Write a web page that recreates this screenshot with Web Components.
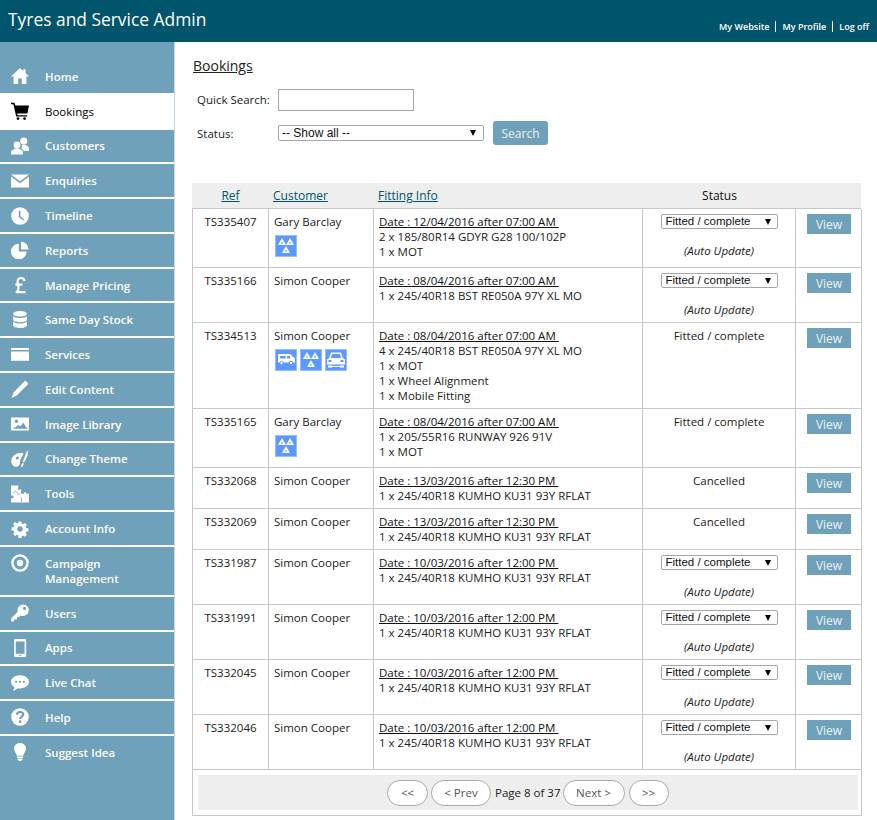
<!DOCTYPE html>
<html>
<head>
<meta charset="utf-8">
<title>Tyres and Service Admin</title>
<style>
html, body { margin: 0; height: 820px; overflow: hidden; background: #fff; }
body { font: 12px/15px "Open Sans", "Liberation Sans", sans-serif; color: #222; }
</style>
</head>
<body>
<admin-shell>
  <admin-header slot="header" title="Tyres and Service Admin"></admin-header>
  <side-nav slot="nav">
    <nav-item icon="home">Home</nav-item>
    <nav-item icon="cart" active>Bookings</nav-item>
    <nav-item icon="customers">Customers</nav-item>
    <nav-item icon="mail">Enquiries</nav-item>
    <nav-item icon="clock">Timeline</nav-item>
    <nav-item icon="pie">Reports</nav-item>
    <nav-item icon="pound">Manage Pricing</nav-item>
    <nav-item icon="stack">Same Day Stock</nav-item>
    <nav-item icon="card">Services</nav-item>
    <nav-item icon="pencil">Edit Content</nav-item>
    <nav-item icon="image">Image Library</nav-item>
    <nav-item icon="palette">Change Theme</nav-item>
    <nav-item icon="puzzle">Tools</nav-item>
    <nav-item icon="gear">Account Info</nav-item>
    <nav-item icon="target">Campaign<br>Management</nav-item>
    <nav-item icon="key">Users</nav-item>
    <nav-item icon="phone">Apps</nav-item>
    <nav-item icon="chat">Live Chat</nav-item>
    <nav-item icon="help">Help</nav-item>
    <nav-item icon="bulb" last>Suggest Idea</nav-item>
  </side-nav>
  <bookings-page>
    <search-form></search-form>
    <booking-table>
      <booking-row ref="TS335407" customer="Gary Barclay" date="12/04/2016 after 07:00 AM" badges="mot" status="select">
        <div>2 x 185/80R14 GDYR G28 100/102P</div><div>1 x MOT</div>
      </booking-row>
      <booking-row ref="TS335166" customer="Simon Cooper" date="08/04/2016 after 07:00 AM" status="select">
        <div>1 x 245/40R18 BST RE050A 97Y XL MO</div>
      </booking-row>
      <booking-row ref="TS334513" customer="Simon Cooper" date="08/04/2016 after 07:00 AM" badges="van mot car" status="Fitted / complete">
        <div>4 x 245/40R18 BST RE050A 97Y XL MO</div><div>1 x MOT</div><div>1 x Wheel Alignment</div><div>1 x Mobile Fitting</div>
      </booking-row>
      <booking-row ref="TS335165" customer="Gary Barclay" date="08/04/2016 after 07:00 AM" badges="mot" status="Fitted / complete">
        <div>1 x 205/55R16 RUNWAY 926 91V</div><div>1 x MOT</div>
      </booking-row>
      <booking-row ref="TS332068" customer="Simon Cooper" date="13/03/2016 after 12:30 PM" status="Cancelled">
        <div>1 x 245/40R18 KUMHO KU31 93Y RFLAT</div>
      </booking-row>
      <booking-row ref="TS332069" customer="Simon Cooper" date="13/03/2016 after 12:30 PM" status="Cancelled">
        <div>1 x 245/40R18 KUMHO KU31 93Y RFLAT</div>
      </booking-row>
      <booking-row ref="TS331987" customer="Simon Cooper" date="10/03/2016 after 12:00 PM" status="select">
        <div>1 x 245/40R18 KUMHO KU31 93Y RFLAT</div>
      </booking-row>
      <booking-row ref="TS331991" customer="Simon Cooper" date="10/03/2016 after 12:00 PM" status="select">
        <div>1 x 245/40R18 KUMHO KU31 93Y RFLAT</div>
      </booking-row>
      <booking-row ref="TS332045" customer="Simon Cooper" date="10/03/2016 after 12:00 PM" status="select">
        <div>1 x 245/40R18 KUMHO KU31 93Y RFLAT</div>
      </booking-row>
      <booking-row ref="TS332046" customer="Simon Cooper" date="10/03/2016 after 12:00 PM" status="select">
        <div>1 x 245/40R18 KUMHO KU31 93Y RFLAT</div>
      </booking-row>
      <table-pager page="8" pages="37"></table-pager>
    </booking-table>
  </bookings-page>
</admin-shell>

<script>
const BLUE = '#6fa1bb';

// nav icons, all on an 18 x 18 box
const ICONS = {
  home: `<path d="M9 1l3.200 3V2.200h2.400v4L18 9.600h-2.600V17h-4.600v-5.400H7.200V17H2.600V9.600H0z"/>`,
  cart: `<path d="M0 .8h3.400l1 2.600H18l-1.600 8.200H6.200l.4 1.600h9.600v1.400H5.200L2.400 2.200H0z"/><circle cx="7" cy="16.600" r="1.400"/><circle cx="13.600" cy="16.600" r="1.400"/>`,
  customers: `<circle cx="6" cy="8" r="3.400"/><path d="M0 17.600v-2.800c0-2 3.400-2.200 3.800-3.400h4.400c.4 1.200 3.800 1.400 3.800 3.400v2.800z"/><circle cx="12.800" cy="4" r="3.600"/><path d="M10.600 7.800h4.400c.4 1.200 3 1.600 3 3.600v2.600h-5c-.6-1.400-2.200-2-2.800-2.800 1.400-1.200 1-2.600.4-3.400z"/>`,
  mail: `<path d="M0 2.400h18L9 9.200z"/><path d="M0 4.400l9 6.800 9-6.800v11.200H0z"/>`,
  clock: `<circle cx="9" cy="9" r="8.800"/><path d="M8.600 3.800v5.800l4 3.400" fill="none" stroke="${BLUE}" stroke-width="1.600"/>`,
  pie: `<path d="M7.800 2.800v7.800h7.800A7.800 7.800 0 1 1 7.800 2.800z"/><path d="M10 .6a7.800 7.800 0 0 1 7.600 7.800H10z"/>`,
  pound: `<path d="M13.500 5.200C13.200 2.800 11.800 2 10.200 2 8 2 6.600 3.400 6.600 5.600c0 3 .9 4.400.9 6.600 0 2-1 3.200-2.500 4h9.600M4.400 8.600h7" fill="none" stroke="currentColor" stroke-width="2.200"/>`,
  stack: `<path d="M2.200 2.800C2.200 1 5.200 0 9 0s6.800 1 6.800 2.800S12.800 5.600 9 5.600 2.200 4.600 2.200 2.800z"/><path d="M2.200 5c1 1.400 4 2 6.800 2s5.800-.6 6.800-2v3.400c0 1.800-3 2.800-6.800 2.800s-6.800-1-6.800-2.800z"/><path d="M2.200 10.600c1 1.400 4 2 6.800 2s5.800-.6 6.800-2v3.600C15.800 16 12.800 17 9 17s-6.800-1-6.800-2.800z"/>`,
  card: `<path d="M0 2h18v2H0zM0 5.400h18V14.800H0z"/>`,
  pencil: `<path d="M14.200.6l3.200 3.200L6 15.200.4 18l2.400-5.800z"/>`,
  image: `<path fill-rule="evenodd" d="M0 2.400h18v13.200H0zM2 13.800h14.400l-4.200-6-3 3.600-1.800-1.400zM5.400 4.400a1.800 1.800 0 1 0 0 3.600 1.800 1.800 0 0 0 0-3.600z"/>`,
  palette: `<path fill-rule="evenodd" d="M9.800 2.800C5 2.800.2 6.400.2 11.200c0 3.400 2.600 5.600 5.200 5.600 2.200 0 3-1.800 3.400-3.400l.6-3.800 3-5.400c-.6-1.400-1.400-1.400-2.600-1.400zM6.400 6.400a1.500 1.500 0 1 0 0 3 1.500 1.500 0 0 0 0-3z"/><path d="M16.200 .6c1.200 1.200 1 3.400.4 4.800l-3.400 6.800-1.400-.6 2.800-7c.4-1.200.8-2.600 1.600-4z"/><path d="M11.200 12.800l1.800.8-1.800 3.600-1.200-.4z"/>`,
  puzzle: `<path d="M0 .4h7.400v2.200c-.8.600-.8 2 .4 2.200 1.200.2 2-.6 2.400-1v5h3c-.4-1 .2-1.800 1-1.800s1.200.8.8 1.800h3v8.800H0v-4.400c1.400.6 2.600 0 2.600-1.400S1.200 10.200 0 10.800z"/><path d="M2.400 8.400c1-2.600 2.600-2.600 3.600-.6s2 2 3.600.2M10.400 12.400v5" fill="none" stroke="${BLUE}" stroke-width=".8"/>`,
  gear: `<path fill-rule="evenodd" d="M7.400.6h3.200l.4 2.400 1.500.6 2-1.400 2.200 2.200-1.400 2 .7 1.600 2.400.4v3.200l-2.400.4-.7 1.500 1.400 2-2.200 2.200-2-1.400-1.500.7-.4 2.400H7.400L7 16l-1.500-.7-2 1.400-2.200-2.200 1.400-2-.7-1.500L-.4 10.600V7.400L2 7l.7-1.600-1.400-2 2.200-2.200 2 1.400L7 3zM9 6a3 3 0 1 0 0 6 3 3 0 0 0 0-6z" transform="translate(.9 .9) scale(.9)"/>`,
  target: `<path fill-rule="evenodd" d="M9 .2a8.800 8.800 0 1 1 0 17.600A8.800 8.800 0 0 1 9 .2zm0 2.400a6.400 6.400 0 1 0 0 12.800A6.400 6.400 0 0 0 9 2.600z"/><circle cx="9" cy="9" r="3.200"/>`,
  key: `<path fill-rule="evenodd" d="M12 .4a5.800 5.800 0 1 1-2.400 11.100L8 13.200H6v2H4L2.400 17.600H.2v-3.400l6.500-6.400A5.800 5.800 0 0 1 12 .4zm1.600 2.400a1.600 1.600 0 1 0 0 3.200 1.600 1.600 0 0 0 0-3.200z"/>`,
  phone: `<path fill-rule="evenodd" d="M4 0h10.400a.8.800 0 0 1 .8.800v16.400a.8.800 0 0 1-.8.800H4a.8.800 0 0 1-.8-.8V.8A.8.800 0 0 1 4 0zm.8 2.400v12.400h8.800V2.400zM9.200 15.600a.8.800 0 1 0 0 1.600.8.800 0 0 0 0-1.600z"/>`,
  chat: `<path d="M9 1.200c5 0 9 2.900 9 6.600s-4 6.600-9 6.600c-.8 0-1.600-.1-2.300-.2C5.600 15.400 3.800 16.400 1.800 16.800c.8-1 1.400-2.200 1.500-3.600C1.300 12 0 10 0 7.800 0 4.100 4 1.200 9 1.200z"/><g fill="${BLUE}"><circle cx="5.200" cy="7.800" r="1.100"/><circle cx="9" cy="7.800" r="1.100"/><circle cx="12.800" cy="7.800" r="1.100"/></g>`,
  help: `<circle cx="9" cy="9" r="8.800"/><path d="M6 6.800C6 5 7.400 4 9.100 4 10.800 4 12.200 5 12.200 6.600 12.200 8.600 9.200 8.800 9.200 11" fill="none" stroke="${BLUE}" stroke-width="2.200"/><rect x="8" y="12.400" width="2.400" height="2.400" fill="${BLUE}"/>`,
  bulb: `<path d="M9 0c3.400 0 6 2.400 6 5.600 0 3-2.200 4.400-2.800 7.200H5.800C5.200 10 3 8.600 3 5.600 3 2.400 5.600 0 9 0z"/><path d="M6 13.600h6v1.400H6zM6.600 15.600h4.800v1.200L10 18H8l-1.400-1.200z"/>`
};

// small road sign style badges in the customer column
const tri = (x, y) => `<path d="M${x} ${y}l4 7h-8z" fill="#fff"/><path d="M${x} ${y + 3.600}l1.100 1.900h-2.200z" fill="#5b98ff"/>`;
const BADGES = {
  mot: tri(7, 3) + tri(15, 3) + tri(11, 11),
  van: `<path d="M3 5h12.400l2.600 3 2 1.200V13.500H3z" fill="#fff"/><rect x="5" y="7" width="5.500" height="2.500" fill="#5b98ff"/><rect x="12" y="7" width="3" height="2.500" fill="#5b98ff"/><circle cx="6.500" cy="14" r="1.700" fill="#fff" stroke="#5b98ff"/><circle cx="16" cy="14" r="1.700" fill="#fff" stroke="#5b98ff"/>`,
  car: `<path fill-rule="evenodd" d="M6 3.500h10l2 5.500 2 1.500V15.500H2V10.500L4 9zM7.200 5L5.800 9h10.400l-1.400-4zM3.500 11v2h3v-2zM15.500 11v2h3v-2z" fill="#fff"/><rect x="3" y="16.500" width="4" height="2" fill="#fff"/><rect x="15" y="16.500" width="4" height="2" fill="#fff"/><rect x="7" y="17" width="8" height="1" fill="#fff"/>`
};

class AdminShell extends HTMLElement {
  constructor() {
    super();
    this.attachShadow({ mode: 'open' });
    this.shadowRoot.innerHTML = `
      <style>
        :host { display: block; height: 820px; }
        .body { display: flex; height: 778px; }
      </style>
      <slot name="header"></slot>
      <div class="body">
        <slot name="nav"></slot>
        <slot></slot>
      </div>`;
  }
}
customElements.define('admin-shell', AdminShell);

class AdminHeader extends HTMLElement {
  connectedCallback() {
    this.attachShadow({ mode: 'open' }).innerHTML = `
      <style>
        :host { display: flex; justify-content: space-between; height: 42px; background: #00546b; color: #fff; padding: 0 8px; }
        h1 { margin: 0; font: 400 17.400px/38px "Open Sans", sans-serif; }
        nav { display: flex; align-items: center; margin: 21px 0 0; height: 11px; font-size: 9px; line-height: 11px; font-weight: 600; }
        a { color: #fff; text-decoration: none; padding: 0 6px; border-left: 1.500px solid #fff; }
        a:first-child { border-left: 0; }
        a:last-child { padding-right: 0; }
      </style>
      <h1>${this.getAttribute('title')}</h1>
      <nav><a>My Website</a><a>My Profile</a><a>Log off</a></nav>`;
  }
}
customElements.define('admin-header', AdminHeader);

class SideNav extends HTMLElement {
  constructor() {
    super();
    this.attachShadow({ mode: 'open' }).innerHTML = `
      <style>
        :host { display: block; flex: none; width: 174px; padding-top: 18px; background: ${BLUE}; border-right: 1px solid #c9dbe6; }
      </style>
      <slot></slot>`;
  }
}
customElements.define('side-nav', SideNav);

class NavItem extends HTMLElement {
  connectedCallback() {
    const last = this.hasAttribute('last');
    this.attachShadow({ mode: 'open' }).innerHTML = `
      <style>
        :host { display: flex; gap: 16px; padding: 8.900px 0 8.900px 11px; border-bottom: 2px solid ${last ? 'transparent' : '#fff'};
          color: #fff; font-weight: 600; font-size: 11.500px; line-height: 15px; }
        :host([active]) { background: #fff; color: #000; font-weight: 400; }
        svg { flex: none; width: 18px; height: 18px; margin: -1.500px 0; fill: currentColor; }
      </style>
      <svg viewBox="0 0 18 18">${ICONS[this.getAttribute('icon')]}</svg>
      <div><slot></slot></div>`;
  }
}
customElements.define('nav-item', NavItem);

class BookingsPage extends HTMLElement {
  constructor() {
    super();
    this.attachShadow({ mode: 'open' }).innerHTML = `
      <style>
        :host { display: block; flex: 1; padding: 14px 0 0 17px; min-width: 0; }
        h2 { margin: 0 0 14px 1px; font: 400 14px/19px "Open Sans", sans-serif; color: #222; text-decoration: underline; }
      </style>
      <h2>Bookings</h2>
      <slot></slot>`;
  }
}
customElements.define('bookings-page', BookingsPage);

class SearchForm extends HTMLElement {
  connectedCallback() {
    this.attachShadow({ mode: 'open' }).innerHTML = `
      <style>
        :host { display: grid; grid-template-columns: 81px 206px auto; align-items: center; justify-content: start;
          row-gap: 10px; padding-left: 5px; margin-bottom: 38px; }
        label { font-size: 11.500px; }
        label.top { align-self: start; margin-top: 2.500px; }
        input { box-sizing: border-box; width: 136px; height: 22px; border: 1px solid #a9a9a9; padding: 0 4px; background: #fff; }
        button { margin-left: 9px; width: 55px; height: 24px; padding: 0; border: 0; border-radius: 3px; background: ${BLUE}; color: #e9f1f5; font: 400 12px "Open Sans", sans-serif; }
      </style>
      <label class="top">Quick Search:</label><input type="text"><span></span>
      <label>Status:</label>
      <status-select options="-- Show all --" wide></status-select>
      <button>Search</button>`;
  }
}
customElements.define('search-form', SearchForm);

class StatusSelect extends HTMLElement {
  connectedCallback() {
    const wide = this.hasAttribute('wide');
    this.attachShadow({ mode: 'open' }).innerHTML = `
      <style>
        :host { display: block; position: relative; width: ${wide ? 206 : 117}px; height: ${wide ? 16 : 15}px; }
        select { appearance: none; -webkit-appearance: none; box-sizing: border-box; display: block; width: 100%; height: 100%;
          margin: 0; padding: 0 0 0 ${wide ? 3 : 4}px; border: 1px solid #a6a6a6; border-radius: 2px; background: #fff; color: #111;
          font: ${wide ? 12 : 11.5}px/13px "Liberation Sans", Arial, sans-serif; }
        i { position: absolute; top: 50%; right: ${wide ? 8 : 7}px; margin-top: -3px; width: 0; height: 0;
          border: 3px solid transparent; border-top: 6px solid #000; border-bottom: 0; pointer-events: none; }
      </style>
      <select><option>${this.getAttribute('options')}</option></select><i></i>`;
  }
}
customElements.define('status-select', StatusSelect);

class BookingTable extends HTMLElement {
  constructor() {
    super();
    this.attachShadow({ mode: 'open' }).innerHTML = `
      <style>
        :host { display: block; width: 669px; }
        .head { display: grid; grid-template-columns: 77px 105px 269px 153px 65px; height: 25px;
          align-items: center; background: #eee; border-bottom: 1px solid #c8c8c8; }
        .head > * { padding-left: 4px; }
        a { color: #00546b; text-decoration: underline; }
        .c { text-align: center; padding: 0 !important; }
        .rows { border: 1px solid #c8c8c8; border-top: 0; width: 668px; }
      </style>
      <div class="head">
        <div class="c"><a>Ref</a></div><div><a>Customer</a></div><div><a>Fitting Info</a></div><div class="c" style="color:#111">Status</div><div></div>
      </div>
      <div class="rows"><slot></slot></div>`;
  }
}
customElements.define('booking-table', BookingTable);

class BookingRow extends HTMLElement {
  connectedCallback() {
    const status = this.getAttribute('status');
    const badges = (this.getAttribute('badges') || '').split(' ').filter(Boolean);
    const statusCell = status === 'select'
      ? `<status-select options="Fitted / complete"></status-select><em>(Auto Update)</em>`
      : status;
    this.attachShadow({ mode: 'open' }).innerHTML = `
      <style>
        :host { display: grid; grid-template-columns: 76px 105px 269px 153px 65px; border-bottom: 1px solid #c8c8c8; color: #222; font-size: 11.500px; }
        .cell { padding: 5px; border-right: 1px solid #c8c8c8; box-sizing: border-box; }
        .cell:last-child { border-right: 0; }
        .ref { text-align: center; padding-left: 0; padding-right: 0; }
        .badges { display: flex; gap: 3px; margin: 6px 0 5px 1px; }
        .badges svg { width: 22px; height: 22px; display: block; }
        .date { text-decoration: underline; color: #111; white-space: pre; }
        .status { display: flex; flex-direction: column; align-items: center; }
        em { margin-top: 14px; }
        .cell.act { padding: 5px 0 0 11px; }
      </style>
      <div class="cell ref">${this.getAttribute('ref')}</div>
      <div class="cell">${this.getAttribute('customer')}${badges.length ? `<div class="badges">${badges.map(b =>
        `<svg viewBox="0 0 22 22"><rect x=".5" y=".5" width="21" height="21" fill="#5b98ff" stroke="#94bcff"/>${BADGES[b]}</svg>`).join('')}</div>` : ''}</div>
      <div class="cell"><div class="date">Date : ${this.getAttribute('date')} </div><slot></slot></div>
      <div class="cell status">${statusCell}</div>
      <div class="cell act"><view-button>View</view-button></div>`;
  }
}
customElements.define('booking-row', BookingRow);

class ViewButton extends HTMLElement {
  constructor() {
    super();
    this.attachShadow({ mode: 'open' }).innerHTML = `
      <style>
        :host { display: block; width: 44px; height: 20px; background: ${BLUE}; color: #eaf2f6; text-align: center; font: 400 12px/22px "Open Sans", sans-serif; }
      </style>
      <slot></slot>`;
  }
}
customElements.define('view-button', ViewButton);

class TablePager extends HTMLElement {
  connectedCallback() {
    this.attachShadow({ mode: 'open' }).innerHTML = `
      <style>
        :host { display: flex; align-items: center; height: 35px; margin: 5px 3px 5px 5px; padding-left: 189px; background: #eee; box-sizing: border-box; font-size: 11.500px; }
        a { box-sizing: border-box; height: 26px; border: 1px solid #aaa; border-radius: 13px; background: #fff; color: #555; line-height: 24px; text-align: center; }
        span { color: #222; margin: 0 2px 0 4px; }
      </style>
      <a style="width:41px;margin-right:3px">&lt;&lt;</a><a style="width:60px">&lt; Prev</a>
      <span>Page ${this.getAttribute('page')} of ${this.getAttribute('pages')}</span>
      <a style="width:62px;margin-right:4px">Next &gt;</a><a style="width:40px">&gt;&gt;</a>`;
  }
}
customElements.define('table-pager', TablePager);
</script>
</body>
</html>
